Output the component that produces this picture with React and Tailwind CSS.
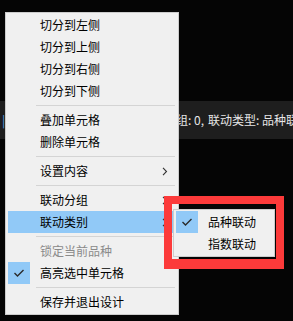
import React from 'react'

const FONT = { fontFamily: '"Noto Sans CJK SC", "Noto Sans", sans-serif' }

function Check() {
  return (
    <svg width="12" height="10" viewBox="0 0 12 10" fill="none">
      <path d="M1.5 5 L4.5 8 L10.5 2" stroke="#2b2b2b" strokeWidth="1.4" />
    </svg>
  )
}

function Arrow() {
  return (
    <svg width="6" height="9" viewBox="0 0 6 9" fill="none">
      <path d="M1 0.8 L4.5 4.5 L1 8.2" stroke="#333" strokeWidth="1.1" />
    </svg>
  )
}

function Item({ label, arrow, active, checked, disabled }) {
  return (
    <div className={`mx-[2px] h-[22px] flex items-center text-[12px] ${active ? 'bg-[#91c9f7]' : ''} ${disabled ? 'text-[#8a8a8a]' : 'text-black'}`}>
      <div className={`w-[22px] h-[22px] flex items-center justify-center ${checked ? 'bg-[#91c9f7]' : ''}`}>
        {checked && <Check />}
      </div>
      <span className="ml-[10px] flex-1 leading-none">{label}</span>
      {arrow && (
        <span className="mr-[8px] flex items-center">
          <Arrow />
        </span>
      )}
    </div>
  )
}

function Sep() {
  return (
    <div className="h-[7px] flex items-center pl-[30px] pr-[3px]">
      <div className="h-px w-full bg-[#d4d4d4]" />
    </div>
  )
}

export default function App() {
  return (
    <div className="relative w-[293px] h-[321px] bg-[#050505] overflow-hidden" style={FONT}>
      <div className="h-[101px]" />
      <div className="h-[38px] bg-[#1e1e1e] flex items-center text-[12px] text-[#e6e6e6] whitespace-nowrap">
        <div className="w-[204px] shrink-0 flex items-center justify-between pl-[2px]">
          <span className="text-[#5aa0e0]">|</span>
          <span>联动分组: 0,</span>
        </div>
        <span className="ml-[4px]">联动类型: 品种联动</span>
      </div>

      {/* context menu */}
      <div className="absolute left-[5px] top-[12px] w-[174px] bg-[#f0f0f0] border border-[#cccccc] py-[1px]">
        <Item label="切分到左侧" />
        <Item label="切分到上侧" />
        <Item label="切分到右侧" />
        <Item label="切分到下侧" />
        <Sep />
        <Item label="叠加单元格" />
        <Item label="删除单元格" />
        <Sep />
        <Item label="设置内容" arrow />
        <Sep />
        <Item label="联动分组" arrow />
        <Item label="联动类别" arrow active />
        <Sep />
        <Item label="锁定当前品种" disabled />
        <Item label="高亮选中单元格" checked />
        <Sep />
        <Item label="保存并退出设计" />
      </div>

      {/* submenu */}
      <div className="absolute left-[173px] top-[209px] w-[102px] bg-[#f0f0f0] border border-[#cccccc] py-[1px]">
        <Item label="品种联动" checked />
        <Item label="指数联动" />
      </div>

      {/* annotation box */}
      <div className="absolute left-[164px] top-[196px] w-[120px] h-[73px] border-[8px] border-b-[10px] border-[#fc3a3a]" />
    </div>
  )
}
